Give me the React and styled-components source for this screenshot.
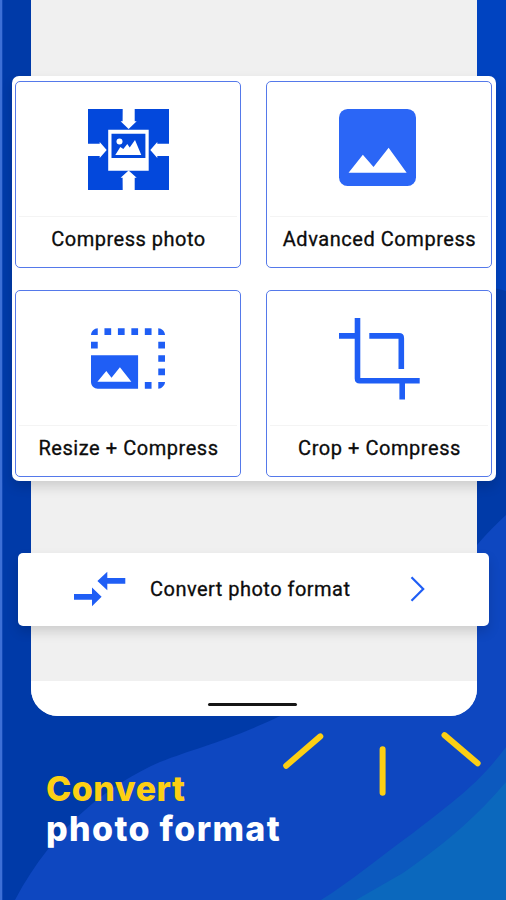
import React from 'react'
import styled, { createGlobalStyle, css } from 'styled-components'

const blue = "#1f5ef5";
const deepBlue = "#0348dc";
const yellow = "#fccf14";

const GlobalStyle = createGlobalStyle`
* {
  box-sizing: border-box;
}

body {
  margin: 0;
  background-color: #003aa8;
}
`

const Container = styled.div`
position: relative;
isolation: isolate;
width: 506px;
height: 900px;
overflow: hidden;
background-color: #003aa8;
font-family: Roboto, "Liberation Sans", sans-serif;
`

const Waves = styled.svg`
position: absolute;
top: 0;
left: 0;
z-index: -1;
`

const Phone = styled.main`
display: flex;
flex-direction: column;
align-items: center;
width: 446px;
height: 716px;
margin-left: 30.5px;
padding-top: 76px;
background-color: #f0f0f0;
border-radius: 0 0 27px 27px;
`

const floating = css`
flex-shrink: 0;
background-color: white;
box-shadow: 0 6px 12px rgba(0, 0, 0, 0.14);
`

const Panel = styled.section`
${floating}
display: grid;
grid-template-columns: 226px 226px;
grid-template-rows: 187px 187px;
gap: 22px 25px;
width: 484px;
height: 405px;
margin-left: 1px;
padding: 5px 3px;
border-radius: 7px;
`

const Card = styled.div`
display: flex;
flex-direction: column;
padding: 0 3px;
border: 1.5px solid #5579ea;
border-radius: 5px;
`

const CardIcon = styled.div`
display: flex;
align-items: flex-start;
justify-content: center;
height: 135px;
padding-top: ${props => props.$top}px;
padding-right: ${props => props.$shift || 0}px;
border-bottom: 1px solid #f4f4f4;
`

const label = css`
font-size: 20px;
font-weight: 400;
color: #0c0c0c;
-webkit-text-stroke: 0.3px #0c0c0c;
white-space: nowrap;
`

const CardTitle = styled.div`
${label}
line-height: 24px;
padding-top: 10px;
padding-left: 1px;
text-align: center;
letter-spacing: ${props => props.$spacing}px;
`

const ConvertBar = styled.div`
${floating}
display: flex;
align-items: center;
width: 471px;
height: 73px;
margin-top: 72px;
padding: 0 64px 2px 56px;
border-radius: 5px;
`

const ConvertTitle = styled.span`
${label}
margin-left: 24px;
margin-right: auto;
letter-spacing: 0.48px;
`

const NavBar = styled.div`
display: flex;
justify-content: center;
width: 100%;
height: 35px;
margin-top: auto;
padding-top: 22px;
background-color: white;
border-radius: 0 0 27px 27px;
`

const HomeLine = styled.div`
width: 89px;
height: 2.5px;
margin-right: 2px;
border-radius: 2px;
background-color: #161616;
`

const Footer = styled.footer`
display: flex;
justify-content: space-between;
align-items: flex-start;
padding: 15px 22px 0 46px;
`

const Heading = styled.h1`
width: 236px;
margin: 38px 0 0;
font-family: Inter, "Liberation Sans", sans-serif;
font-size: 34px;
font-weight: 800;
line-height: 40px;
white-space: nowrap;
color: white;
`

const HeadingLine = styled.span`
display: block;
color: ${props => props.$color};
letter-spacing: ${props => props.$spacing}px;
`

const CompressIcon = () => (
    <svg width="81" height="81" viewBox="0 0 81 81">
        <path fill={deepBlue} d="M0 0H81V81H0z" />
        <g fill="white">
            <path d="M34.7 0h12v12.3h2L40.6 20l-8-7.7h2z" />
            <path d="M34.7 81h12V68.7h2L40.6 61.6l-8 7.1h2z" />
            <path d="M0 34.7h11.7V33l7 8-7 8v-2H0z" />
            <path d="M81 34.7H69.3V33l-7 8 7 8v-2H81z" />
            <path d="M20.2 20.7H60.7V61.7H20.2z" />
        </g>
        <path fill={deepBlue} d="M23.5 24.7H57.4V49H23.5z" />
        <circle cx="31.5" cy="32.5" r="3" fill="white" />
        <path fill="white" d="M27.3 46l5-8 3 2 4-5 2.4 3.5L47 31l6.3 15z" />
    </svg>
)

const ImageIcon = () => (
    <svg width="77" height="77" viewBox="0 0 76.5 76.5">
        <rect width="76.5" height="76.5" rx="8.5" fill="#2b66f6" />
        <path fill="white" d="M9.5 63.3L23.7 45.5l10.6 12L49.3 38.5 67.2 63.3z" />
    </svg>
)

const ResizeIcon = () => (
    <svg width="74" height="61" viewBox="0 0 22 18">
        <g fill={blue}>
            <path d="M2 0v2H0C0 1 1 0 2 0z" />
            <path d="M4 0h2v2H4zM8 0h2v2H8zM12 0h2v2h-2zM16 0h2v2h-2z" />
            <path d="M20 0v2h2C22 1 21 0 20 0z" />
            <path d="M0 4h2v2H0zM20 4h2v2h-2zM20 8h2v2h-2zM20 12h2v2h-2z" />
            <path d="M16 16h2v2h-2zM20 16h2c0 1-1 2-2 2z" />
            <path d="M0 8h14v10H2c-1.1 0-2-.9-2-2z" />
        </g>
        <path fill="white" d="M1.9 15.9l2.65-3.2L6.1 14.7l2.5-3.1 3.4 4.3z" />
    </svg>
)

const CropIcon = () => (
    <svg width="81" height="82" viewBox="0 0 81 82" fill="none" stroke={blue} strokeWidth="5.6">
        <path d="M18.5 0V60.5Q18.5 62.8 20.8 62.8H80.7" />
        <path d="M0 17.9H18.5M30.3 17.9H60Q62.3 17.9 62.3 20.2V51M63.2 63V81.4" />
    </svg>
)

const SwapIcon = () => (
    <svg width="52" height="36" viewBox="0 0 52 36" fill={blue}>
        <path d="M51.3 7H33.3V0.7L23.4 10l9.9 9.3V12.7h18z" />
        <path d="M0 23h18v-6.5L27.6 25.8 18 35.2v-6.5H0z" />
    </svg>
)

const ChevronIcon = () => (
    <svg width="15" height="26" viewBox="0 0 15 26" fill="none" stroke={blue} strokeWidth="2.2">
        <path d="M1.5 1.3l11.7 11.7L1.5 24.7" />
    </svg>
)

const Rays = () => (
    <svg width="201" height="66" viewBox="283 731 201 66" stroke={yellow} strokeWidth="6" strokeLinecap="round">
        <path d="M286.2 765.7L320.3 736.4M382.6 749.3V792.7M444.5 735.1L477.6 763.3" />
    </svg>
)

const cards = [
    { title: "Compress photo", icon: <CompressIcon />, top: 27, spacing: 0.5 },
    { title: "Advanced Compress", icon: <ImageIcon />, top: 27, shift: 4, spacing: 0.55 },
    { title: "Resize + Compress", icon: <ResizeIcon />, top: 37, spacing: 0.55 },
    { title: "Crop + Compress", icon: <CropIcon />, top: 27, spacing: 0.55 },
];

const App = () => {
    return (
        <>
            <GlobalStyle />
            <Container>
                <Waves width="506" height="900" viewBox="0 0 506 900">
                    <path fill="#0043c0" d="M440 0H506V291Q490 286 440 282z" />
                    <path fill="#0e47c0" d="M506 515Q478 541 466 560C420 640 350 690 278 717C225 742 195 748 160 762C110 784 55 825 15 900H506z" />
                    <path fill="#0c59be" d="M506 747C478 785 450 804 413 833C380 857 350 882 321 900H506z" />
                    <path fill="#0b68bd" d="M506 782C478 815 450 840 403 873L356 900H506z" />
                    <path fill="#3e70d6" d="M0 0H2.3V900H0z" />
                </Waves>
                <Phone>
                    <Panel>
                        {cards.map(card => (
                            <Card key={card.title}>
                                <CardIcon $top={card.top} $shift={card.shift}>{card.icon}</CardIcon>
                                <CardTitle $spacing={card.spacing}>{card.title}</CardTitle>
                            </Card>
                        ))}
                    </Panel>
                    <ConvertBar>
                        <SwapIcon />
                        <ConvertTitle>Convert photo format</ConvertTitle>
                        <ChevronIcon />
                    </ConvertBar>
                    <NavBar>
                        <HomeLine />
                    </NavBar>
                </Phone>
                <Footer>
                    <Heading>
                        <HeadingLine $color={yellow} $spacing={0.5}>Convert</HeadingLine>
                        <HeadingLine $color="white" $spacing={1.35}>photo format</HeadingLine>
                    </Heading>
                    <Rays />
                </Footer>
            </Container>
        </>
    )
}

export default App
